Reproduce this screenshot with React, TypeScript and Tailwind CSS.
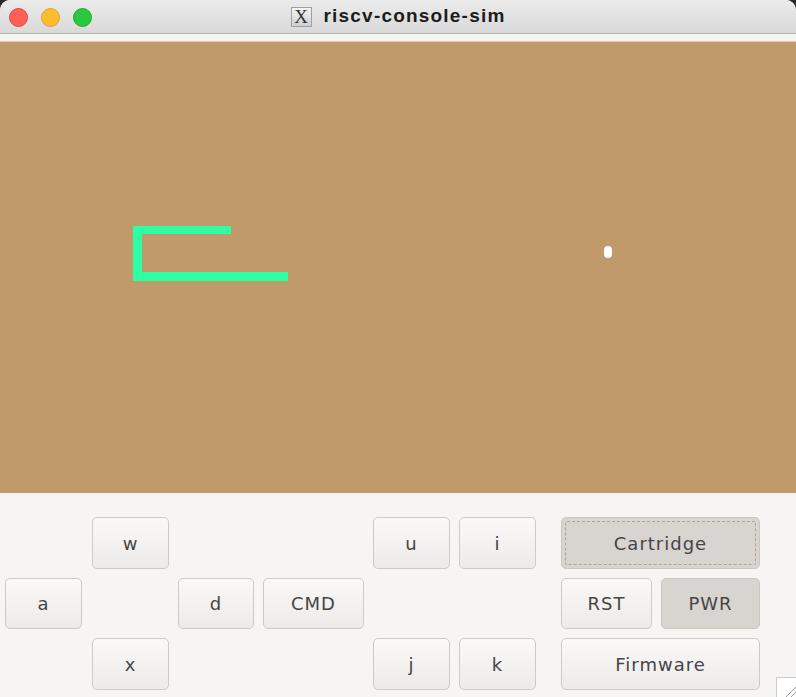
import React from 'react';

const btnBase =
  "flex items-center justify-center rounded-[5px] border text-[18px] tracking-[1px] text-[#454545] [font-family:'DejaVu_Sans',sans-serif]";
const btnNormal = `${btnBase} border-[#cfcac5] bg-gradient-to-b from-[#faf9f8] to-[#edebe9]`;
const btnPressed = `${btnBase} border-[#cbc6c1] bg-[#d8d4d0]`;

function Key({ label, className }: { label: string; className: string }) {
  return <div className={`${btnNormal} ${className}`}>{label}</div>;
}

export default function App() {
  return (
    <div className="w-[796px] h-[697px] bg-[#2a2a2a] overflow-hidden">
      <div className="flex flex-col h-full rounded-t-[10px] overflow-hidden bg-[#f6f5f4]">
        {/* title bar */}
        <div className="relative h-[34px] shrink-0 flex items-center justify-center bg-gradient-to-b from-[#ebebeb] to-[#d9d9d9] border-b border-[#b4b4b4]">
          <div className="absolute left-[9px] top-[8px] flex gap-[13px]">
            <span className="w-[19px] h-[19px] rounded-full bg-[#fe5f57] border border-[#e0443e]" />
            <span className="w-[19px] h-[19px] rounded-full bg-[#febc2e] border border-[#dea123]" />
            <span className="w-[19px] h-[19px] rounded-full bg-[#28c840] border border-[#1aab29]" />
          </div>
          <div className="flex items-center gap-[12px]">
            <div className="w-[21px] h-[20px] flex items-center justify-center bg-gradient-to-b from-[#f4f4f4] to-[#cfcfcf] border border-[#a0a0a0] text-[19px] leading-none text-[#333] [font-family:'Liberation_Serif',serif]">
              X
            </div>
            <span className="text-[19px] font-bold tracking-[1.2px] text-[#1c1c1c] [font-family:'Liberation_Sans',sans-serif]">
              riscv-console-sim
            </span>
          </div>
        </div>
        <div className="h-[8px] shrink-0 bg-[#f6f5f4] border-b border-[#e9c9a4]" />

        {/* screen */}
        <div className="relative h-[451px] shrink-0 bg-[#c09a6b]">
          <div className="absolute left-[133px] top-[184px] w-[98px] h-[8px] bg-[#2effa4]" />
          <div className="absolute left-[133px] top-[184px] w-[9px] h-[55px] bg-[#2effa4]" />
          <div className="absolute left-[133px] top-[230px] w-[155px] h-[9px] bg-[#2effa4]" />
          <div className="absolute left-[604px] top-[204px] w-[8px] h-[12px] rounded-full bg-white" />
        </div>

        {/* controls */}
        <div className="relative flex-1 pt-[24px] pl-[5px] bg-[#f6f5f4]">
          <div className="grid grid-cols-[78px_77px_76px_101px_77px_77px_7px_91px_99px] grid-rows-[52px_51px_52px] gap-x-[9px] gap-y-[9px]">
            <Key label="w" className="col-start-2 row-start-1 w-[77px]" />
            <Key label="u" className="col-start-5 row-start-1" />
            <Key label="i" className="col-start-6 row-start-1" />
            <div className={`${btnPressed} col-start-8 col-span-2 row-start-1 p-[3px]`}>
              <div className="w-full h-full flex items-center justify-center border border-dashed border-[#a9a4a0] rounded-[2px]">
                Cartridge
              </div>
            </div>

            <Key label="a" className="col-start-1 row-start-2 w-[77px]" />
            <Key label="d" className="col-start-3 row-start-2" />
            <Key label="CMD" className="col-start-4 row-start-2" />
            <Key label="RST" className="col-start-8 row-start-2" />
            <div className={`${btnPressed} col-start-9 row-start-2`}>PWR</div>

            <Key label="x" className="col-start-2 row-start-3 w-[77px]" />
            <Key label="j" className="col-start-5 row-start-3" />
            <Key label="k" className="col-start-6 row-start-3" />
            <Key label="Firmware" className="col-start-8 col-span-2 row-start-3" />
          </div>

          {/* size grip */}
          <div className="absolute right-0 bottom-0 w-[20px] h-[20px] bg-white border-l border-t border-[#cfcac5]">
            <svg width="20" height="20" viewBox="0 0 20 20" className="block">
              <path d="M8 20 L20 8 M13 20 L20 13" stroke="#9a9a9a" strokeWidth="1" fill="none" />
            </svg>
          </div>
        </div>
      </div>
    </div>
  );
}
